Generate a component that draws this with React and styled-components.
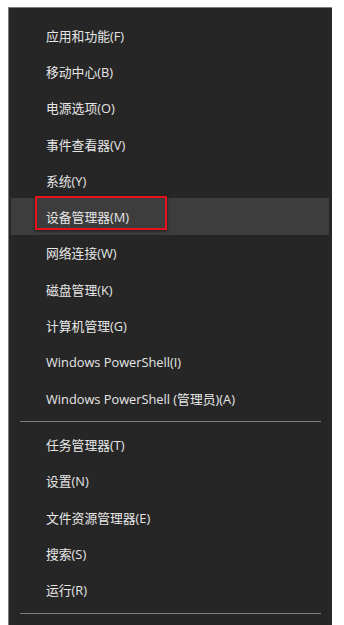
import React from "react";
import styled, { createGlobalStyle } from "styled-components";

const Global = createGlobalStyle`
  html, body { margin: 0; padding: 0; background: #ffffff; }
  body { font-family: "Open Sans", "Noto Sans CJK SC", sans-serif; overflow: hidden; }
`;

const Panel = styled.div`
  margin: 7px 0 0 8px;
  width: 324px;
  height: 640px;
  box-sizing: border-box;
  background: #262626;
  border-top: 1px solid #7c7c7c;
  border-left: 1px solid #7c7c7c;
  padding-top: 9px;
`;

const Row = styled.div`
  position: relative;
  height: 36.3px;
  margin: 0 3px 0 2px;
  padding-left: 35px;
  display: flex;
  align-items: center;
  background: ${(p) => (p.$active ? "#3d3d3d" : "transparent")};
  color: #e6e6e6;
  font-size: 12.8px;
  white-space: nowrap;
`;

const Separator = styled.div`
  height: 1px;
  margin: 5px 11px 4px 11px;
  background: #7a7a7a;
`;

const Highlight = styled.div`
  position: absolute;
  left: 24px;
  top: -2px;
  width: 132px;
  height: 34px;
  box-sizing: border-box;
  border: 2px solid #e8101a;
  box-shadow: 0 1px 3px rgba(0, 0, 0, 0.6);
  pointer-events: none;
`;

const groupA = [
  "应用和功能(F)",
  "移动中心(B)",
  "电源选项(O)",
  "事件查看器(V)",
  "系统(Y)",
  "设备管理器(M)",
  "网络连接(W)",
  "磁盘管理(K)",
  "计算机管理(G)",
  "Windows PowerShell(I)",
  "Windows PowerShell (管理员)(A)",
];

const groupB = [
  "任务管理器(T)",
  "设置(N)",
  "文件资源管理器(E)",
  "搜索(S)",
  "运行(R)",
];

export default function App() {
  return (
    <>
      <Global />
      <Panel>
        {groupA.map((label) => {
          const active = label === "设备管理器(M)";
          return (
            <Row key={label} $active={active}>
              {label}
              {active && <Highlight />}
            </Row>
          );
        })}
        <Separator />
        {groupB.map((label) => (
          <Row key={label}>{label}</Row>
        ))}
        <Separator />
      </Panel>
    </>
  );
}
